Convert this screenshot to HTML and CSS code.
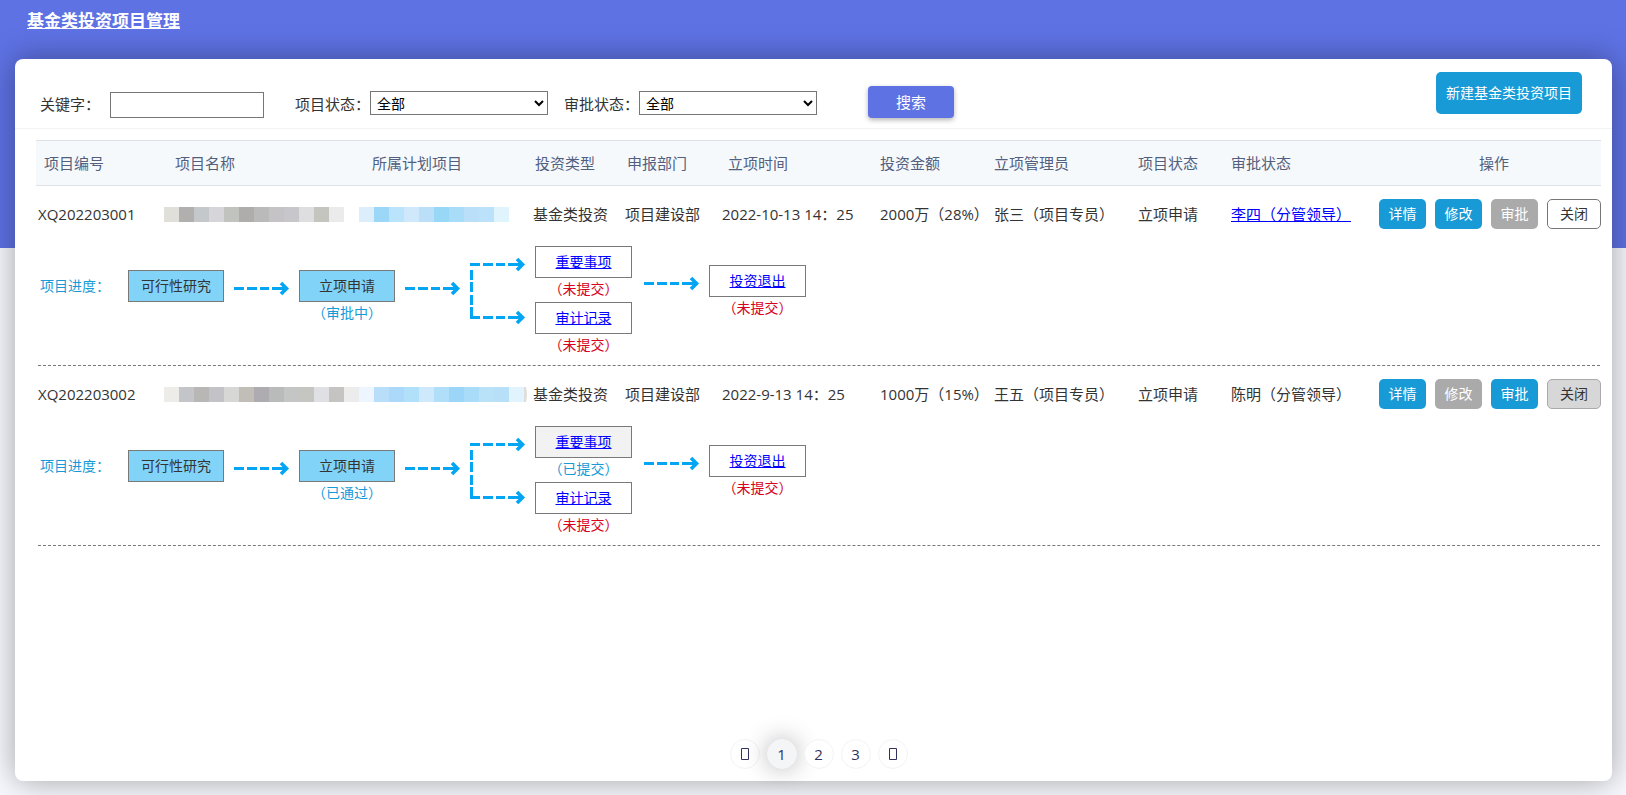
FILE: index.html
```html
<!DOCTYPE html>
<html lang="zh-CN">
<head>
<meta charset="utf-8">
<title>基金类投资项目管理</title>
<link rel="stylesheet" href="styles.css">
</head>
<body>
<svg class="symbols" aria-hidden="true">
  <symbol id="arrow" viewBox="0 0 56 36">
    <path d="M0 18.5H10M13 18.5H23M26 18.5H35M38 18.5H52" fill="none" stroke="#04a5f2" stroke-width="3"/>
    <path d="M47 13L52.500 18.500L47 24" fill="none" stroke="#04a5f2" stroke-width="3.600"/>
  </symbol>
  <symbol id="branch" viewBox="0 0 56 84">
    <path d="M0 18.500H10M13 18.500H23M26 18.500H35M38 18.500H52M0 71.500H10M13 71.500H23M26 71.500H35M38 71.500H52M1.500 24V34M1.500 36V46M1.500 49V59M1.500 61V71" fill="none" stroke="#04a5f2" stroke-width="3"/>
    <path d="M47 13L52.500 18.500L47 24M47 66L52.500 71.500L47 77" fill="none" stroke="#04a5f2" stroke-width="3.600"/>
  </symbol>
</svg>
<h1 class="page-title">基金类投资项目管理</h1>
<main class="card">
  <div class="toolbar">
    <form class="filters">
      <label class="label" for="keyword">关键字：</label>
      <input class="field keyword" id="keyword" type="text">
      <label class="label" for="state">项目状态：</label>
      <select class="field select state" id="state"><option>全部</option></select>
      <label class="label" for="approval">审批状态：</label>
      <select class="field select" id="approval"><option>全部</option></select>
      <button class="search" type="button">搜索</button>
    </form>
    <button class="create" type="button">新建基金类投资项目</button>
  </div>

  <div class="content">
    <table class="projects">
      <colgroup>
        <col class="c-code"><col class="c-name"><col class="c-plan"><col class="c-type"><col class="c-dept"><col class="c-date"><col class="c-amount"><col class="c-admin"><col class="c-state"><col class="c-approval"><col class="c-ops">
      </colgroup>
      <thead>
        <tr><th>项目编号</th><th class="name-head">项目名称</th><th class="plan-head">所属计划项目</th><th>投资类型</th><th>申报部门</th><th class="date-head">立项时间</th><th class="flush">投资金额</th><th class="flush">立项管理员</th><th class="flush">项目状态</th><th class="flush">审批状态</th><th class="ops-head">操作</th></tr>
      </thead>
      <tbody>
        <tr class="row">
          <td class="code">XQ202203001</td>
          <td><svg class="mosaic" width="180" height="15" aria-hidden="true"><path fill="#e0dfda" d="M0 0h15v15H0z"/><path fill="#b1b0af" d="M15 0h15v15H15z"/><path fill="#c5c8cb" d="M30 0h15v15H30z"/><path fill="#d6d6da" d="M45 0h15v15H45z"/><path fill="#c1c3bf" d="M60 0h15v15H60z"/><path fill="#aeadab" d="M75 0h15v15H75z"/><path fill="#bbbabb" d="M90 0h15v15H90z"/><path fill="#c6c3c7" d="M105 0h15v15h-15z"/><path fill="#c7c6ca" d="M120 0h15v15h-15z"/><path fill="#dedee0" d="M135 0h15v15h-15z"/><path fill="#c5c5c0" d="M150 0h15v15h-15z"/><path fill="#eaebea" d="M165 0h15v15h-15z"/></svg></td>
          <td><svg class="mosaic" width="150" height="15" aria-hidden="true"><path fill="#dceefb" d="M0 0h15v15H0z"/><path fill="#9dd7f7" d="M15 0h15v15H15z"/><path fill="#b9e4fb" d="M30 0h15v15H30z"/><path fill="#cfe8fc" d="M45 0h15v15H45z"/><path fill="#bbdff8" d="M60 0h15v15H60z"/><path fill="#99d7f6" d="M75 0h15v15H75z"/><path fill="#a9dcf8" d="M90 0h15v15H90z"/><path fill="#b9e0f8" d="M105 0h15v15h-15z"/><path fill="#bce1fa" d="M120 0h15v15h-15z"/><path fill="#e0f4fe" d="M135 0h15v15h-15z"/></svg></td>
          <td>基金类投资</td><td>项目建设部</td><td>2022-10-13 14：25</td><td>2000万（28%）</td><td>张三（项目专员）</td><td>立项申请</td><td><a href="#">李四（分管领导）</a></td>
          <td><div class="ops"><button class="btn" type="button">详情</button><button class="btn" type="button">修改</button><button class="btn off" type="button" disabled>审批</button><button class="btn close" type="button">关闭</button></div></td>
        </tr>
        <tr class="flow-row">
          <td colspan="11">
            <div class="flow">
              <span class="flow-label">项目进度：</span>
              <div class="step low"><span class="node done">可行性研究</span></div>
              <svg class="arrow low" width="56" height="36" aria-hidden="true"><use href="#arrow"/></svg>
              <div class="step low"><span class="node done">立项申请</span><span class="status">（审批中）</span></div>
              <svg class="arrow low" width="56" height="36" aria-hidden="true"><use href="#arrow"/></svg>
              <svg class="branch" width="56" height="84" aria-hidden="true"><use href="#branch"/></svg>
              <div class="step"><a class="node" href="#">重要事项</a><span class="status missing">（未提交）</span><a class="node" href="#">审计记录</a><span class="status missing">（未提交）</span></div>
              <svg class="arrow mid last" width="56" height="36" aria-hidden="true"><use href="#arrow"/></svg>
              <div class="step mid"><a class="node" href="#">投资退出</a><span class="status missing">（未提交）</span></div>
            </div>
          </td>
        </tr>
      </tbody>
      <tbody>
        <tr class="row">
          <td class="code">XQ202203002</td>
          <td><svg class="mosaic" width="195" height="15" aria-hidden="true"><path fill="#edece8" d="M0 0h15v15H0z"/><path fill="#c3c5c8" d="M15 0h15v15H15z"/><path fill="#b8b7b6" d="M30 0h15v15H30z"/><path fill="#c3c2c6" d="M45 0h15v15H45z"/><path fill="#d7d7d5" d="M60 0h15v15H60z"/><path fill="#c1bdb7" d="M75 0h15v15H75z"/><path fill="#aeacb0" d="M90 0h15v15H90z"/><path fill="#b9bbba" d="M105 0h15v15h-15z"/><path fill="#c4c6c5" d="M120 0h15v15h-15z"/><path fill="#c5c5c1" d="M135 0h15v15h-15z"/><path fill="#dfe0e3" d="M150 0h15v15h-15z"/><path fill="#c5c4c2" d="M165 0h15v15h-15z"/><path fill="#ececec" d="M180 0h15v15h-15z"/></svg></td>
          <td><svg class="mosaic" width="168" height="15" aria-hidden="true"><path fill="#edf6fe" d="M0 0h15v15H0z"/><path fill="#b8def9" d="M15 0h15v15H15z"/><path fill="#acd8f9" d="M30 0h15v15H30z"/><path fill="#b1e1fa" d="M45 0h15v15H45z"/><path fill="#cee9fb" d="M60 0h15v15H60z"/><path fill="#b1def8" d="M75 0h15v15H75z"/><path fill="#9bd6f8" d="M90 0h15v15H90z"/><path fill="#a8dcf8" d="M105 0h15v15h-15z"/><path fill="#b9e2f9" d="M120 0h15v15h-15z"/><path fill="#b8dff8" d="M135 0h15v15h-15z"/><path fill="#e1f3fd" d="M150 0h15v15h-15z"/><path fill="#e0deda" d="M165 0h2q2 7 0 15h-2z"/></svg></td>
          <td>基金类投资</td><td>项目建设部</td><td>2022-9-13 14：25</td><td>1000万（15%）</td><td>王五（项目专员）</td><td>立项申请</td><td>陈明（分管领导）</td>
          <td><div class="ops"><button class="btn" type="button">详情</button><button class="btn off" type="button" disabled>修改</button><button class="btn" type="button">审批</button><button class="btn close closed" type="button" disabled>关闭</button></div></td>
        </tr>
        <tr class="flow-row">
          <td colspan="11">
            <div class="flow">
              <span class="flow-label">项目进度：</span>
              <div class="step low"><span class="node done">可行性研究</span></div>
              <svg class="arrow low" width="56" height="36" aria-hidden="true"><use href="#arrow"/></svg>
              <div class="step low"><span class="node done">立项申请</span><span class="status">（已通过）</span></div>
              <svg class="arrow low" width="56" height="36" aria-hidden="true"><use href="#arrow"/></svg>
              <svg class="branch" width="56" height="84" aria-hidden="true"><use href="#branch"/></svg>
              <div class="step"><a class="node submitted" href="#">重要事项</a><span class="status">（已提交）</span><a class="node" href="#">审计记录</a><span class="status missing">（未提交）</span></div>
              <svg class="arrow mid last" width="56" height="36" aria-hidden="true"><use href="#arrow"/></svg>
              <div class="step mid"><a class="node" href="#">投资退出</a><span class="status missing">（未提交）</span></div>
            </div>
          </td>
        </tr>
      </tbody>
    </table>
  </div>

  <nav class="pager" aria-label="分页">
    <button class="page" type="button" aria-label="上一页"><svg width="10" height="14" aria-hidden="true"><path d="M1.500 1.500h7v11h-7z" fill="none" stroke="#32325d"/></svg></button>
    <button class="page current" type="button" aria-current="page">1</button>
    <button class="page" type="button">2</button>
    <button class="page" type="button">3</button>
    <button class="page" type="button" aria-label="下一页"><svg width="10" height="14" aria-hidden="true"><path d="M1.500 1.500h7v11h-7z" fill="none" stroke="#32325d"/></svg></button>
  </nav>
</main>
</body>
</html>
```
FILE: styles.css
```css
* {
  box-sizing: border-box;
}

body {
  display: flex;
  flex-direction: column;
  min-height: 100vh;
  margin: 0;
  background: linear-gradient(#5e72e4 248px, #f8f9fe 248px);
  color: #333;
  font-family: "Open Sans", "Noto Sans CJK SC", sans-serif;
  font-size: 15px;
  line-height: 20px;
}

button,
input,
select {
  font: inherit;
}

button {
  padding: 0;
  cursor: pointer;
}

a {
  color: #00f;
}

.symbols {
  display: none;
}

.page-title {
  margin: 0;
  padding: 11px 27px 28px;
  color: #fff;
  font-size: 17px;
  font-weight: 700;
  line-height: 20px;
  text-decoration: underline;
}

.card {
  display: flex;
  flex: 1;
  flex-direction: column;
  margin: 0 14px 14px 15px;
  border-radius: 8px;
  background: #fff;
  box-shadow: 0 0 32px rgba(0, 0, 0, 0.36);
}

.toolbar {
  display: flex;
  align-items: flex-start;
  justify-content: space-between;
  padding: 13px 30px 10px 25px;
  border-bottom: 1px solid #f2f3f5;
}

.filters {
  display: flex;
  align-items: flex-end;
  margin-top: 14px;
}

.label {
  flex: none;
  margin-bottom: 4px;
}

.field {
  height: 24px;
  border: 1px solid #767676;
  border-radius: 0;
  background: #fff;
  color: #000;
  font-size: 14px;
}

.keyword {
  width: 154px;
  height: 26px;
  margin: 0 31px 0 10px;
}

.select {
  width: 178px;
  margin-bottom: 3px;
  padding: 0 2px;
}

.state {
  margin-right: 16px;
}

.search {
  width: 86px;
  height: 32px;
  margin-left: 51px;
  border: 0;
  border-radius: 4px;
  background: #5e72e4;
  box-shadow: 0 2px 5px rgba(0, 0, 0, 0.3);
  color: #fff;
}

.create {
  height: 42px;
  padding: 0 10px;
  border: 0;
  border-radius: 5px;
  background: #189ad6;
  color: #fff;
  font-size: 14px;
}

.content {
  padding: 11px 11px 0 21px;
}

.projects {
  width: 100%;
  border-collapse: separate;
  border-spacing: 0;
  table-layout: fixed;
}

.c-code { width: 128px; }
.c-name { width: 195px; }
.c-plan { width: 174px; }
.c-type { width: 92px; }
.c-dept { width: 97px; }
.c-date { width: 158px; }
.c-amount { width: 114px; }
.c-admin { width: 144px; }
.c-state { width: 93px; }
.c-approval { width: 148px; }
.c-ops { width: 222px; }

th {
  padding: 12px 0 12px 2px;
  border-top: 1px solid #dee2e6;
  border-bottom: 1px solid #dee2e6;
  background: #f6f9fc;
  color: #525f7f;
  font-weight: 400;
  text-align: left;
  white-space: nowrap;
}

th:first-child {
  padding-left: 8px;
}

.name-head {
  padding-left: 11px;
}

.plan-head {
  padding-left: 13px;
}

.date-head {
  padding-left: 6px;
}

.flush {
  padding-left: 0;
}

.ops-head {
  padding-left: 8px;
  text-align: center;
}

td {
  padding: 0;
  white-space: nowrap;
}

.row td {
  padding-top: 13px;
  padding-bottom: 17px;
}

.row .code {
  padding-left: 2px;
}

.mosaic {
  display: block;
}

.ops {
  display: flex;
  justify-content: space-between;
}

.btn {
  width: 47px;
  height: 30px;
  border: 0;
  border-radius: 5px;
  background: #189ad6;
  color: #fff;
  font-size: 14px;
}

.off {
  background: #aaa;
}

.close {
  width: 54px;
  border: 1px solid #767676;
  background: #fff;
  color: #333;
}

.closed {
  border-color: #aaa;
  background: #d7d7d7;
}

.flow-row td {
  padding: 0 1px 0 2px;
}

.flow {
  display: flex;
  align-items: flex-start;
  height: 120px;
  border-bottom: 1px dashed #797979;
  font-size: 14px;
}

.flow-label {
  width: 88px;
  margin: 30px 0 0 2px;
  color: #189ad6;
}

.step {
  display: flex;
  flex-direction: column;
  width: 97px;
}

.step.low {
  width: 96px;
}

.node {
  height: 32px;
  border: 1px solid #797979;
  line-height: 30px;
  text-align: center;
}

.done {
  background: #81d3f8;
}

.submitted {
  background: #f2f2f2;
}

.status {
  height: 24px;
  color: #189ad6;
  line-height: 22px;
  text-align: center;
}

.missing {
  color: #d9001b;
}

.low {
  margin-top: 24px;
}

.mid {
  margin-top: 19px;
}

.arrow {
  margin-left: 10px;
  margin-right: 9px;
}

.last {
  margin-left: 12px;
}

.branch {
  margin-right: 9px;
}

.pager {
  display: flex;
  justify-content: center;
  gap: 7px;
  margin-top: auto;
  padding: 24px 0 12px 10px;
}

.page {
  display: flex;
  align-items: center;
  justify-content: center;
  width: 30px;
  height: 30px;
  border: 1px solid #f2f3f5;
  border-radius: 50%;
  background: #fff;
  color: #32325d;
}

.current {
  border-color: #f4f5f7;
  background: #f4f5f7;
  box-shadow: 0 0 24px rgba(0, 0, 0, 0.3);
}
```
